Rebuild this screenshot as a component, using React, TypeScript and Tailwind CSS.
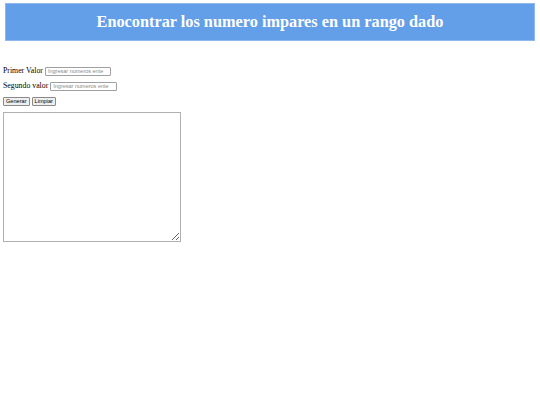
export default function App() {
  return (
    <div className="min-h-[405px] bg-white font-['Liberation_Serif',serif] text-black">
      <div className="pt-[3px] px-[5px]">
        <h1 className="flex h-[38px] items-center justify-center border border-[#8fb8ee] bg-[#639ee9] text-[16.3px] font-bold text-white">
          Enocontrar los numero impares en un rango dado
        </h1>
      </div>
      <div className="mt-[24px] px-[3px] text-[7.8px] leading-[12px]">
        <div className="flex items-center gap-[2px]">
          <label>Primer Valor</label>
          <input
            type="text"
            placeholder="Ingresar numeros ente"
            className="h-[9px] w-[66px] rounded-[1px] border border-[#a0a0a0] px-[2px] font-['Liberation_Sans',sans-serif] text-[5.5px] placeholder:text-[#8a8a8a]"
          />
        </div>
        <div className="mt-[3px] flex items-center gap-[2px]">
          <label>Segundo valor</label>
          <input
            type="text"
            placeholder="Ingresar numeros ente"
            className="h-[9px] w-[67px] rounded-[1px] border border-[#a0a0a0] px-[2px] font-['Liberation_Sans',sans-serif] text-[5.5px] placeholder:text-[#8a8a8a]"
          />
        </div>
        <div className="mt-[5px] flex gap-[2px] font-['Liberation_Sans',sans-serif] text-[5.6px]">
          <button className="h-[9px] rounded-[1px] border border-[#8a8a8a] bg-[#efefef] px-[2px] leading-none">
            Generar
          </button>
          <button className="h-[9px] rounded-[1px] border border-[#8a8a8a] bg-[#efefef] px-[2px] leading-none">
            Limpiar
          </button>
        </div>
        <textarea className="mt-[6px] block h-[130px] w-[178px] resize border border-[#b0b0b0]" />
      </div>
    </div>
  );
}
